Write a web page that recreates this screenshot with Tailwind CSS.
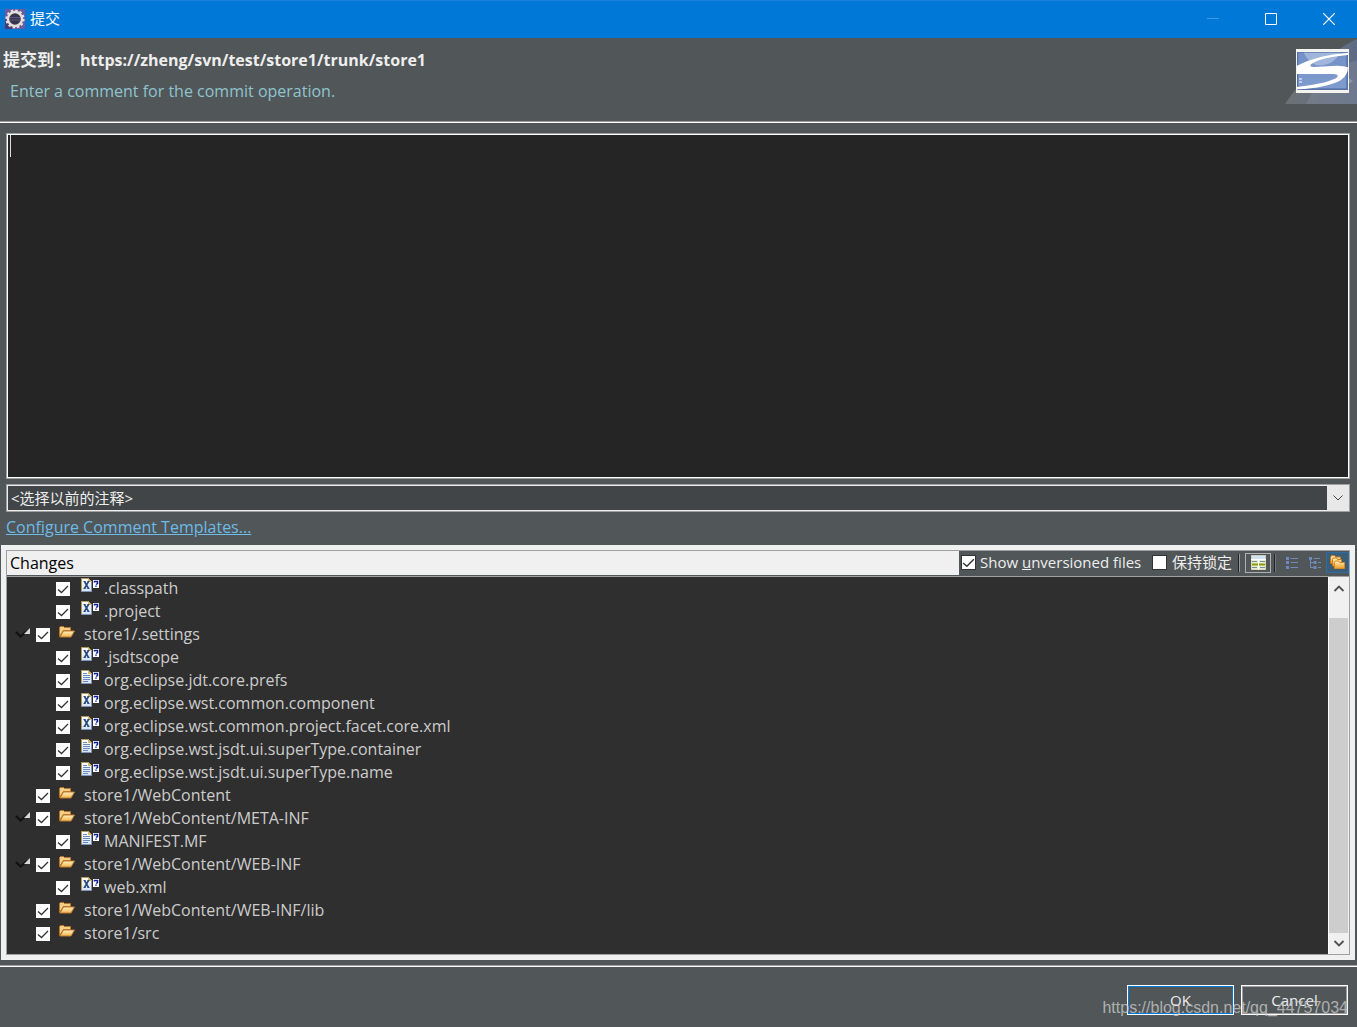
<!DOCTYPE html>
<html lang="zh-CN">
<head>
<meta charset="utf-8">
<title>提交</title>
<script src="https://cdn.jsdelivr.net/npm/@tailwindcss/browser@4"></script>
</head>
<body class="relative flex h-screen flex-col overflow-hidden bg-[#515658] font-['Open_Sans','Noto_Sans_CJK_SC',sans-serif] text-[15px] leading-[23px] text-[#eeeeee]">

<!-- shared icons -->
<svg class="absolute size-0" aria-hidden="true">
  <defs>
    <linearGradient id="page" x1="0" y1="0" x2="0" y2="1"><stop offset="0" stop-color="#fff"/><stop offset="1" stop-color="#d3e3f8"/></linearGradient>
    <linearGradient id="fold" x1="0" y1="0" x2="0" y2="1"><stop offset="0" stop-color="#fff0c0"/><stop offset="1" stop-color="#efb64f"/></linearGradient>
    <linearGradient id="fold2" x1="0" y1="0" x2="0" y2="1"><stop offset="0" stop-color="#fff3c4"/><stop offset="1" stop-color="#f09a1c"/></linearGradient>
  </defs>
  <symbol id="tick" viewBox="0 0 14 14"><path d="M2 7.500 5.500 10.500 12 4" fill="none" stroke="#333" stroke-width="1.300"/></symbol>
  <symbol id="sheet" viewBox="0 0 18 14">
    <path d="M.5.5h7l3 3v10h-10z" fill="url(#page)" stroke="#8194b8"/>
    <path d="M.5 13V.5h7" fill="none" stroke="#b09a58"/>
    <path d="M7 0l4 4H7z" fill="#dcb85c"/>
    <path d="M12 2h6v8h-6z" fill="#fff"/>
    <path d="M13.500 4.500v-1h3v2l-1.500 1M15 7.500v1.300" fill="none" stroke="#10209a" stroke-width="1.500"/>
  </symbol>
  <symbol id="xml" viewBox="0 0 18 14"><use href="#sheet"/><path d="M3.500 3.500l4 7M7.500 3.500l-4 7" stroke="#2b4a78" stroke-width="1.600"/><path d="M2.500 3.500h2M6.500 3.500h2M2.500 10.500h2M6.500 10.500h2" stroke="#2b4a78"/></symbol>
  <symbol id="txt" viewBox="0 0 18 14"><use href="#sheet"/><path d="M2 3.500h4M2 5.500h7M2 7.500h7M2 9.500h7M2 11.500h5" stroke="#6b88bf"/></symbol>
  <symbol id="folder" viewBox="0 0 16 12">
    <path d="M.5 10.500V1.500L1.500.5h3l1 1h6v3h-7z" fill="#f3cf86" stroke="#b9742a"/>
    <path d="M1 11l3.500-6h11l-3.500 6z" fill="url(#fold)" stroke="#c07a2c"/>
  </symbol>
  <symbol id="twist" viewBox="0 0 16 12"><path d="M1 5l4.500 4.500L12 4" fill="none" stroke="#111" stroke-width="2.200"/><path d="M15 1v6H9z" fill="#d8d8d8"/></symbol>
</svg>

<header class="flex h-[38px] shrink-0 items-center border-t border-[#1a84dc] bg-[#0078d7] pb-[2px] pl-[5px] text-white">
  <svg class="size-5" viewBox="0 0 20 20">
    <rect width="20" height="20" fill="#6b5a9c"/><path d="M0 20V10L10 20z" fill="#463a72"/>
    <circle cx="10" cy="10" r="8.600" fill="none" stroke="#e9e4df" stroke-width="2" stroke-dasharray="2.400 2.100"/>
    <circle cx="10" cy="10" r="7" fill="#37344c" stroke="#e4e0dc" stroke-width="2.400"/>
    <path d="M5 8.500h10M4.500 11h11" stroke="#5b5685"/>
  </svg>
  <h1 class="ml-[5px] flex-1">提交</h1>
  <button class="flex h-full w-[58px] items-center justify-center pl-[2px]" aria-label="Minimize"><svg class="size-3" viewBox="0 0 12 12"><path d="M0 5.500h12" stroke="#3f9be2"/></svg></button>
  <button class="flex h-full w-[58px] items-center justify-center pl-[2px]" aria-label="Maximize"><svg class="size-3" viewBox="0 0 12 12"><path d="M.5.5h11v11H.5z" fill="none" stroke="#fff"/></svg></button>
  <button class="flex h-full w-[58px] items-center justify-center pl-[2px]" aria-label="Close"><svg class="size-3" viewBox="0 0 12 12"><path d="M0 0l12 12M12 0L0 12" stroke="#fff" stroke-width="1.200"/></svg></button>
</header>

<section class="flex h-[85px] shrink-0 justify-between border-b border-white">
  <div class="flex-1 border-b border-[#a0a0a0] pt-[10px]">
    <h2 class="flex gap-[9px] pl-[3px] text-[16px] font-bold leading-6"><span class="text-[17px]">提交到：</span><span>https://zheng/svn/test/store1/trunk/store1</span></h2>
    <p class="mt-2 pl-[10px] text-base leading-[23px] text-[#8fc4cf]">Enter a comment for the commit operation.</p>
  </div>
  <div class="border-b border-[#a0a0a0]">
  <svg class="h-[66px] w-[72px]" viewBox="384 114 216 198">
    <defs>
      <linearGradient id="fan" x1="0" x2="1"><stop offset="0" stop-color="#6d7274"/><stop offset="1" stop-color="#5d6b85"/></linearGradient>
      <linearGradient id="sky" x1="0" y1="0" x2="0" y2="1"><stop offset="0" stop-color="#7391c6"/><stop offset="1" stop-color="#7f9bce"/></linearGradient>
    </defs>
    <path d="M384 312Q470 180 600 116V312z" fill="url(#fan)"/>
    <path d="M446 312Q490 215 600 180V312z" fill="#8d93a3" opacity=".35"/>
    <path d="M560 225l28 18-20 14z" fill="#8b93a6"/>
    <rect x="417" y="147" width="159" height="132" fill="#f4f3ef"/>
    <rect x="420" y="156" width="153" height="114" fill="#5673a8"/>
    <rect x="424" y="158" width="144" height="107" fill="url(#sky)"/>
    <path d="M440 158h110q-20 35-55 38t-55-38z" fill="#b3c5e4" opacity=".7"/>
    <path d="M573 158Q480 165 420 197V222H528Q546 222 541 232Q515 250 420 261V268Q510 264 552 240Q573 226 573 202Q560 197 540 197L470 201Q456 201 462 193Q490 172 573 165z" fill="#fff"/>
    <path d="M426 237h9M426 246h9" stroke="#fff" stroke-width="3"/>
  </svg>
  </div>
</section>

<main class="flex min-h-0 flex-1 flex-col pt-[10px]">
  <div class="flex min-h-0 flex-1 pr-[7px] pl-[6px]">
    <div class="flex flex-1 border border-[#a0a0a0]">
      <div class="flex flex-1 border border-white bg-[#252525] pl-[2px]">
        <textarea class="min-w-0 flex-1 resize-none border-l border-[#dddddd] bg-transparent bg-clip-padding pl-1 outline-none [border-image:linear-gradient(#dddddd_0_23px,transparent_23px)_1]" aria-label="Comment"></textarea>
      </div>
    </div>
  </div>

  <div class="mt-[5px] pr-[7px] pl-[6px]">
    <div class="grid h-7 border border-[#a0a0a0]">
      <select class="col-start-1 row-start-1 w-full appearance-none border border-[#eeeeee] bg-[#414547] pl-[3px] leading-6 outline-none" aria-label="Previous comments"><option>&lt;选择以前的注释&gt;</option></select>
      <span class="pointer-events-none col-start-1 row-start-1 flex w-[22px] items-center justify-center justify-self-end bg-[#e8e8e8]"><svg class="h-2 w-3" viewBox="0 0 12 8"><path d="M1.500 1.500l4.500 4.500 4.500-4.500" fill="none" stroke="#444"/></svg></span>
    </div>
  </div>
  <p class="mt-1 mb-[6px] pl-[6px] text-base leading-[23px]"><a href="#" class="text-[#6cbbe8] underline">Configure Comment Templates...</a></p>

  <section class="mr-[2px] ml-px border-[5px] border-[#f0f0f0]">
    <div class="border border-[#a0a0a0]">
      <div class="flex h-[26px] items-stretch border-b border-[#a0a0a0] bg-[#515658]">
        <h3 class="mb-px flex-1 bg-[#f0f0f0] pl-[3px] text-base leading-[25px] text-black">Changes</h3>
        <div class="flex items-center pb-[2px] pl-[2px]">
          <label class="flex w-[187px] items-center gap-1">
            <span class="grid size-[15px]"><input type="checkbox" checked class="peer col-start-1 row-start-1 appearance-none border border-[#333] bg-white"><svg class="invisible col-start-1 row-start-1 size-[15px] peer-checked:visible"><use href="#tick"/></svg></span>
            <span>Show <u>u</u>nversioned files</span>
          </label>
          <label class="ml-1 flex items-center gap-[5px]">
            <span class="grid size-[15px]"><input type="checkbox" class="peer col-start-1 row-start-1 appearance-none border border-[#333] bg-white"><svg class="invisible col-start-1 row-start-1 size-[15px] peer-checked:visible"><use href="#tick"/></svg></span>
            <span>保持锁定</span>
          </label>
          <span class="ml-[6px] h-[18px] w-[2px] border-r border-[#999] bg-[#222]"></span>
          <button class="ml-[5px] flex h-5 w-[26px] items-center justify-center border border-[#b0b0b0]" aria-label="Show compare pane">
            <svg class="size-[15px]" viewBox="0 0 15 15"><rect width="15" height="15" fill="#e9edd8"/><path d="M0 0h15v4H0z" fill="#cfe3f2"/><path d="M0 0h15v15H0z" fill="none" stroke="#c8c090"/><path d="M0 4.500h15M7.500 5v10" stroke="#fff"/><path d="M1 6.500h5M9 6.500h5M1 12.500h5M9 12.500h5" stroke="#6f9093"/><path d="M1 9.500h6M8 9.500h6" stroke="#8c9a08" stroke-width="2"/></svg>
          </button>
          <span class="ml-[3px] h-[18px] w-[2px] border-r border-[#777] bg-[#222]"></span>
          <button class="ml-2 flex w-4 justify-center" aria-label="Flat layout"><svg class="size-3" viewBox="0 0 12 12"><path d="M0 0h3v3H0zM0 4h3v3H0zM0 9h3v3H0z" fill="#6f87bd"/><path d="M4.500 1.500H12M4.500 5.500H12M4.500 10.500H12" stroke="#7389b8"/></svg></button>
          <button class="ml-[7px] flex w-4 justify-center" aria-label="Tree layout"><svg class="size-3" viewBox="0 0 12 12"><path d="M0 0h3v3H0zM4.500 4h3v3h-3zM4.500 9h3v3h-3z" fill="#6f87bd"/><path d="M4.500 1.500H11M9 5.500h3M9 10.500h3M1.500 3v7.500h3M1.500 5.500h3" fill="none" stroke="#7389b8"/></svg></button>
          <button class="ml-[3px] flex h-[21px] w-[23px] items-center justify-center border border-[#2d6da3] bg-[#3d5c75]" aria-label="Compressed folders">
            <svg class="size-[15px]" viewBox="0 0 15 15"><path d="M.5 8.500v-6l1-2h3l1 1.500h5v6.500z" fill="url(#fold2)" stroke="#c87a1c"/><path d="M2.500 11V4.500l1-1.500h3l1 1.500h4V11z" fill="url(#fold2)" stroke="#c87a1c"/><path d="M4.500 13.500v-6l1-1.500h3l1 1.500h5v6z" fill="url(#fold2)" stroke="#d88a24"/></svg>
          </button>
        </div>
      </div>
      <div class="flex bg-[#2f2f2f] text-base leading-[23px] text-[#cccccc]">
        <ul id="tree" class="flex-1 pb-[9px]"></ul>
        <div class="flex w-[21px] flex-col border-l border-white bg-[#f0f0f0]">
          <button class="flex h-[22px] items-center justify-center" aria-label="Scroll up"><svg class="h-2 w-3" viewBox="0 0 12 8"><path d="M1.500 7L6 2.500 10.500 7" fill="none" stroke="#505050" stroke-width="1.800"/></svg></button>
          <div class="mt-[19px] mr-px flex-1 bg-[#cdcdcd]"></div>
          <button class="flex h-[21px] items-center justify-center" aria-label="Scroll down"><svg class="h-2 w-3" viewBox="0 0 12 8"><path d="M1.500 1L6 5.500 10.500 1" fill="none" stroke="#505050" stroke-width="1.800"/></svg></button>
        </div>
      </div>
    </div>
  </section>
</main>

<footer class="mt-[5px] shrink-0 border-t border-[#a0a0a0]">
  <div class="flex justify-end gap-[7px] border-t border-white pt-[18px] pr-[9px] pb-3">
    <button class="h-[30px] w-[107px] border border-white p-0"><span class="flex h-full items-center justify-center border border-[#0078d7]">OK</span></button>
    <button class="h-[30px] w-[107px] border border-white p-0"><span class="flex h-full items-center justify-center border border-[#a0a0a0]">Cancel</span></button>
  </div>
</footer>

<div class="pointer-events-none absolute right-[9px] bottom-[10px] font-['Liberation_Sans',sans-serif] text-base leading-[18px] text-[#c8c8c8]/80">https://blog.csdn.net/qq_44757034</div>

<script>
  // [kind, name, expanded]
  const rows = [
    ['xml', '.classpath'],
    ['xml', '.project'],
    ['folder', 'store1/.settings', true],
    ['xml', '.jsdtscope'],
    ['txt', 'org.eclipse.jdt.core.prefs'],
    ['xml', 'org.eclipse.wst.common.component'],
    ['xml', 'org.eclipse.wst.common.project.facet.core.xml'],
    ['txt', 'org.eclipse.wst.jsdt.ui.superType.container'],
    ['txt', 'org.eclipse.wst.jsdt.ui.superType.name'],
    ['folder', 'store1/WebContent'],
    ['folder', 'store1/WebContent/META-INF', true],
    ['txt', 'MANIFEST.MF'],
    ['folder', 'store1/WebContent/WEB-INF', true],
    ['xml', 'web.xml'],
    ['folder', 'store1/WebContent/WEB-INF/lib'],
    ['folder', 'store1/src'],
  ];
  const box = '<span class="mt-px grid size-[14px]"><input type="checkbox" checked class="peer col-start-1 row-start-1 appearance-none bg-white"><svg class="invisible col-start-1 row-start-1 size-[14px] peer-checked:visible"><use href="#tick"/></svg></span>';
  document.getElementById('tree').innerHTML = rows.map(([kind, name, open]) => kind === 'folder'
    ? `<li class="flex h-[23px] items-center pl-2"><span class="w-[21px]">${open ? '<svg class="mb-1 h-3 w-4"><use href="#twist"/></svg>' : ''}</span><label class="flex items-center">${box}<svg class="mr-[9px] mb-[5px] ml-[9px] h-3 w-4"><use href="#folder"/></svg>${name}</label></li>`
    : `<li class="flex h-[23px] items-center pl-[49px]"><label class="flex items-center">${box}<svg class="mr-[5px] mb-[7px] ml-[11px] h-[14px] w-[18px]"><use href="#${kind}"/></svg>${name}</label></li>`
  ).join('');
</script>
</body>
</html>
